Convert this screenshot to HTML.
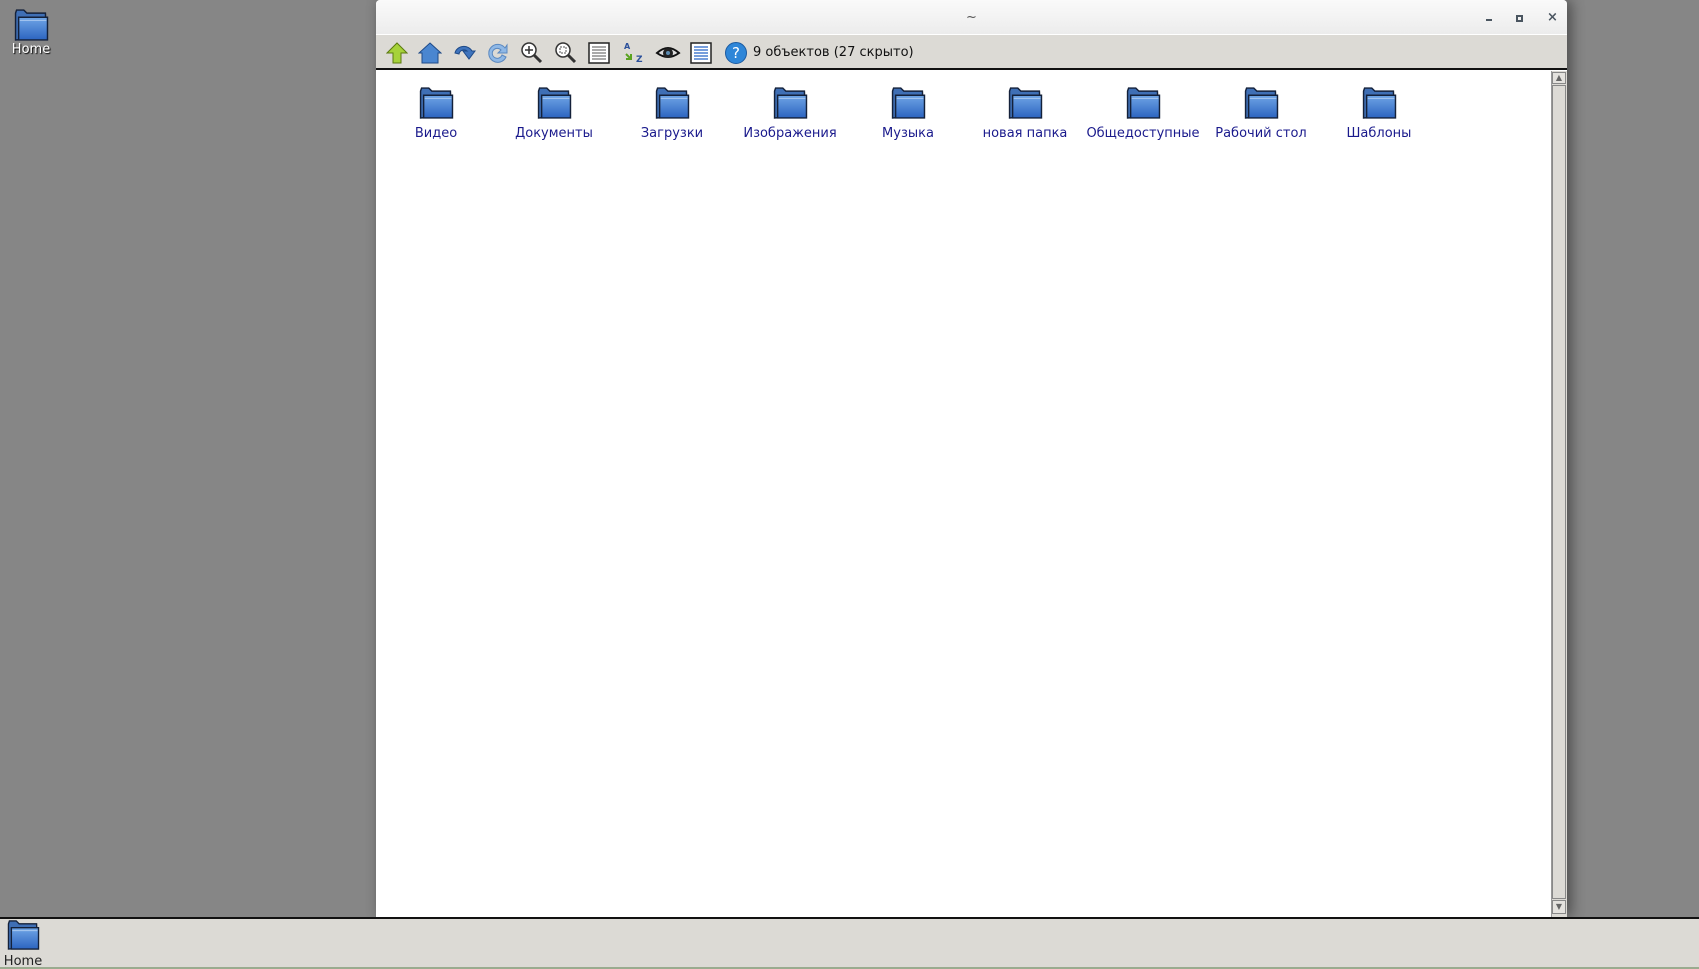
<!DOCTYPE html>
<html><head><meta charset="utf-8"><style>
*{margin:0;padding:0;box-sizing:border-box}
body{width:1699px;height:969px;background:#868686;position:relative;overflow:hidden;font-family:"DejaVu Sans","Liberation Sans",sans-serif}
.abs{position:absolute}
.win{left:376px;top:0;width:1191px;height:917px;background:#fff;box-shadow:4px 0 14px rgba(0,0,0,.45);border-radius:4px 4px 0 0;overflow:hidden}
.title{left:0;top:0;width:100%;height:35px;background:linear-gradient(#fafafa,#ececec);border-bottom:1px solid #fff}
.tb{left:0;top:35px;width:100%;height:35px;background:#dcdad5;border-bottom:2px solid #111}
.fold{width:118px;text-align:center;top:86px;font-size:13px;color:#1a1a8c}
.fold svg{display:block;margin:0 auto 6px}
.task{left:0;top:917px;width:1699px;height:52px;background:#dcdad5;border-top:2px solid #111;border-bottom:2px solid #9aab8f}
.ic{top:41px}
</style></head><body>
<svg width="0" height="0" style="position:absolute"><defs>
<linearGradient id="g" x1="0" y1="0" x2="0" y2="1"><stop offset="0" stop-color="#6fa5e6"/><stop offset="1" stop-color="#2c64c0"/></linearGradient>
<symbol id="f" viewBox="0 0 36 33"><path d="M3 5 L4 2 L11 2 L14 5 L32 5 L33 29 L3 31 Z" fill="#3f6fb5" stroke="#14213a" stroke-width="1.4"/><path d="M6 9 L34 9 L34 31 L6 31 Z" fill="url(#g)" stroke="#14213a" stroke-width="1.4"/><path d="M7 12 L33 12" stroke="#a8c8f0" stroke-width="1"/></symbol>
</defs></svg>

<div class="abs" style="left:10px;top:8px;width:42px;text-align:center;color:#fff;font-size:13px;text-shadow:1px 1px 1px #000">
<svg width="38" height="34"><use href="#f"/></svg><div style="margin-top:-4px">Home</div></div>

<div class="abs win">
<div class="abs title"><div class="abs" style="left:0;width:100%;top:10px;text-align:center;font-size:13px;color:#555">~</div>
<div class="abs" style="left:1110px;top:19px;width:6px;height:2px;background:#4a5560"></div>
<div class="abs" style="left:1140px;top:15px;width:7px;height:7px;border:2px solid #4a5560"></div>
<div class="abs" style="left:1171px;top:10px;font-size:13px;font-weight:bold;color:#4a5560">×</div>
</div>
<div class="abs tb"></div>
<svg class="abs ic" style="left:10px" width="22" height="24"><path d="M11 2 L21 12 L15 12 L15 22 L7 22 L7 12 L1 12 Z" fill="#a6d23a" stroke="#5b7a10"/></svg>
<svg class="abs ic" style="left:42px" width="24" height="24"><path d="M12 2 L23 12 L20 12 L20 22 L4 22 L4 12 L1 12 Z" fill="#4a86d0" stroke="#1e4a88"/></svg>
<svg class="abs ic" style="left:76px" width="24" height="24"><path d="M3 12 A9 8 0 0 1 20 10 L23 10 L17 18 L11 10 L15 10 A5 5 0 0 0 7 13 Z" fill="#3f74bd" stroke="#1e4a88"/></svg>
<svg class="abs ic" style="left:110px" width="24" height="24"><path d="M19 7 A9 9 0 1 0 20 16 L16 14 A5 5 0 1 1 15 9 L12 12 L21 12 L21 4 Z" fill="#8fb8e6" stroke="#5a88c0"/></svg>
<svg class="abs ic" style="left:144px" width="24" height="24"><circle cx="9" cy="9" r="7" fill="#fff" stroke="#333" stroke-width="1.5"/><path d="M9 5v8M5 9h8" stroke="#333" stroke-width="1.5"/><path d="M14 14 L21 21" stroke="#333" stroke-width="3"/></svg>
<svg class="abs ic" style="left:178px" width="24" height="24"><circle cx="9" cy="9" r="7" fill="#fff" stroke="#333" stroke-width="1.5"/><rect x="6" y="6" width="6" height="6" fill="none" stroke="#555" stroke-dasharray="2 1"/><path d="M14 14 L21 21" stroke="#333" stroke-width="3"/></svg>
<svg class="abs ic" style="left:211px" width="24" height="24"><rect x="2" y="2" width="20" height="20" fill="#fff" stroke="#222" stroke-width="1.5"/><path d="M5 6h14M5 9h14M5 12h14M5 15h14M5 18h14" stroke="#555"/></svg>
<svg class="abs ic" style="left:246px" width="24" height="24"><text x="2" y="8" font-size="8" font-weight="bold" fill="#2a4f9a" font-family="DejaVu Sans">A</text><text x="14" y="21" font-size="9" font-weight="bold" fill="#2a4f9a" font-family="DejaVu Sans">Z</text><path d="M4 13 L9 18 M9 13 L9 18 L4 18" stroke="#5aa320" stroke-width="2" fill="none"/></svg>
<svg class="abs ic" style="left:279px" width="26" height="24"><path d="M2 12 Q13 2 24 12 Q13 20 2 12 Z" fill="#ddd" stroke="#111" stroke-width="2"/><circle cx="13" cy="12" r="5" fill="#222"/><circle cx="13" cy="12" r="2" fill="#5a8ab0"/></svg>
<svg class="abs ic" style="left:313px" width="24" height="24"><rect x="2" y="2" width="20" height="20" fill="#fff" stroke="#222" stroke-width="1.5"/><path d="M5 6h14M5 9h14M5 12h14M5 15h14M5 18h14" stroke="#4a7fd0" stroke-width="1.5"/></svg>
<svg class="abs ic" style="left:348px" width="24" height="24"><circle cx="12" cy="12" r="10.5" fill="#2e86d8" stroke="#1b5aa0"/><text x="12" y="17" text-anchor="middle" font-size="15" fill="#fff" font-family="DejaVu Sans">?</text></svg>
<div class="abs" style="left:377px;top:45px;font-size:13px;color:#111">9 объектов (27 скрыто)</div>

<div class="abs fold" style="left:1px"><svg width="38" height="34"><use href="#f"/></svg>Видео</div>
<div class="abs fold" style="left:119px"><svg width="38" height="34"><use href="#f"/></svg>Документы</div>
<div class="abs fold" style="left:237px"><svg width="38" height="34"><use href="#f"/></svg>Загрузки</div>
<div class="abs fold" style="left:355px"><svg width="38" height="34"><use href="#f"/></svg>Изображения</div>
<div class="abs fold" style="left:473px"><svg width="38" height="34"><use href="#f"/></svg>Музыка</div>
<div class="abs fold" style="left:590px"><svg width="38" height="34"><use href="#f"/></svg>новая папка</div>
<div class="abs fold" style="left:708px"><svg width="38" height="34"><use href="#f"/></svg>Общедоступные</div>
<div class="abs fold" style="left:826px"><svg width="38" height="34"><use href="#f"/></svg>Рабочий стол</div>
<div class="abs fold" style="left:944px"><svg width="38" height="34"><use href="#f"/></svg>Шаблоны</div>

<div class="abs" style="left:1175px;top:71px;width:16px;height:846px;background:#dcdad5;border-left:1px solid #999"></div>
<div class="abs" style="left:1176px;top:72px;width:14px;height:12px;background:#e4e2de;border:1px solid #888;font-size:8px;color:#666;text-align:center;line-height:10px">▲</div>
<div class="abs" style="left:1176px;top:85px;width:14px;height:814px;background:#dcdad5;border:1px solid #888"></div>
<div class="abs" style="left:1176px;top:900px;width:14px;height:14px;background:#e4e2de;border:1px solid #888;font-size:8px;color:#666;text-align:center;line-height:12px">▼</div>
</div>

<div class="abs task">
<div class="abs" style="left:3px;top:0;width:40px;text-align:center;font-size:13px;color:#222"><svg width="38" height="32"><use href="#f"/></svg><div style="margin-top:-1px">Home</div></div>
</div>
</body></html>
